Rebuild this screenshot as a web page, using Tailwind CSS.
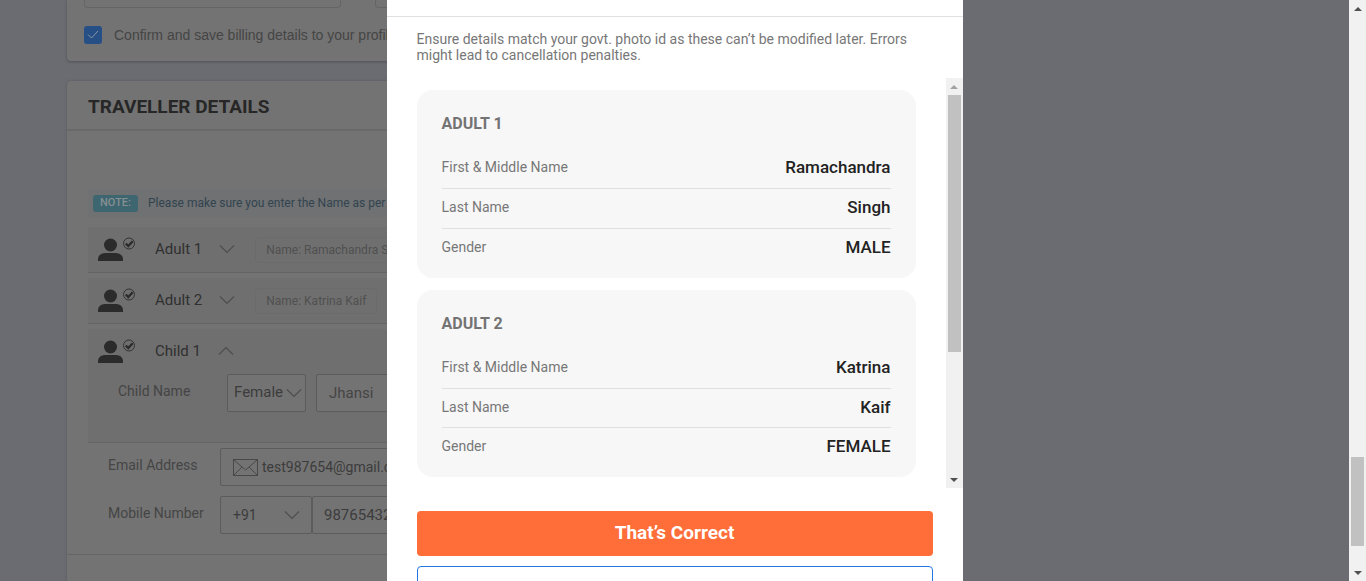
<!DOCTYPE html>
<html lang="en">
<head>
<meta charset="utf-8">
<meta name="viewport" content="width=device-width, initial-scale=1">
<title>Traveller details</title>
<script src="https://cdn.jsdelivr.net/npm/@tailwindcss/browser@4"></script>
</head>
<body class="flex h-screen overflow-hidden bg-[#6b6c71] font-['Roboto','Liberation_Sans',sans-serif] text-sm text-[#454545]">
<svg class="hidden" aria-hidden="true">
  <symbol id="person" viewBox="0 0 40 26">
    <circle cx="12.500" cy="8" r="6.500" fill="#2b2b2b"/>
    <path d="M0 24v-1.500C0 18 3.500 16 7.500 16h10c4 0 7.500 2 7.500 6.500V24z" fill="#2b2b2b"/>
    <circle cx="31" cy="6.500" r="5.500" fill="none" stroke="#333" stroke-width="1"/>
    <path d="m27.800 6.500 2.500 2.600 4.400-4.900" fill="none" stroke="#2b2b2b" stroke-width="2.200"/>
  </symbol>
  <symbol id="chevron" viewBox="0 0 16 10"><path d="m1 1.500 7 7 7-7" fill="none" stroke="#4e4e4e" stroke-width="1.200"/></symbol>
  <symbol id="arrow" viewBox="0 0 8 4"><path d="M0 0h8L4 4z"/></symbol>
</svg>

<div class="relative min-w-0 flex-1 overflow-hidden">
  <main class="ml-[67px] w-3/5">
    <section class="h-[61px] rounded-b bg-[#737373] px-[17px] shadow-[0_1px_3px_#505055]">
      <div class="flex gap-[34px]">
        <div class="h-2 w-[257px] rounded-b border border-t-0 border-[#656565]"></div>
        <div class="h-2 w-[257px] rounded-b border border-t-0 border-[#656565]"></div>
      </div>
      <label class="mt-[18px] flex h-[18px] items-center gap-3 font-['Liberation_Sans'] text-sm text-[#454545]">
        <span class="relative size-[18px]">
          <input type="checkbox" checked class="block size-[18px] appearance-none rounded-[3px] bg-[#264f86]">
          <svg class="pointer-events-none absolute inset-0" viewBox="0 0 18 18" fill="none" stroke="#8b95a3"><path d="m4 8.500 3.500 3.500L14 5"/></svg>
        </span>
        Confirm and save billing details to your profile
      </label>
    </section>

    <section class="mt-5 h-[600px] rounded-t bg-[#737373] shadow-[0_0_3px_#58585d]">
      <h2 class="flex h-[50px] items-center border-b-2 border-[#696969] px-[21px] pt-1 text-[19px] font-bold text-[#272727]">TRAVELLER DETAILS</h2>
      <div class="px-[21px] pt-[58px]">
        <p class="flex h-7 items-center gap-2.5 bg-[#6f7173] pl-[5px] text-xs text-[#32444f]">
          <span class="flex h-[17px] w-[45px] items-center justify-center rounded-[3px] bg-[#3e6670] text-[11px] font-medium text-[#858f91]">NOTE:</span>
          Please make sure you enter the Name as per ID
        </p>
        <div class="mt-2.5 flex flex-col gap-[5px]">
          <div class="flex h-[46px] items-center border-b border-[#646464] bg-[#6f6f6f] pl-2.5">
            <svg class="h-[26px] w-10"><use href="#person"/></svg>
            <button class="ml-[17px] flex items-center gap-[17px] text-[15px] text-[#303030]">Adult 1 <svg class="h-2.5 w-4"><use href="#chevron"/></svg></button>
            <span class="ml-5 flex h-[26px] items-center rounded border border-[#6b6b6b] px-2.5 text-xs text-[#505050]">Name: Ramachandra S</span>
          </div>
          <div class="flex h-[46px] items-center border-b border-[#646464] bg-[#6f6f6f] pl-2.5">
            <svg class="h-[26px] w-10"><use href="#person"/></svg>
            <button class="ml-[17px] flex items-center gap-[17px] text-[15px] text-[#303030]">Adult 2 <svg class="h-2.5 w-4"><use href="#chevron"/></svg></button>
            <span class="ml-5 flex h-[26px] items-center rounded border border-[#6b6b6b] px-2.5 text-xs text-[#505050]">Name: Katrina Kaif</span>
          </div>
          <div class="h-[114px] border-b border-[#646464] bg-[#6f6f6f]">
            <div class="flex h-[45px] items-center pl-2.5">
              <svg class="h-[26px] w-10"><use href="#person"/></svg>
              <button class="ml-[17px] flex items-center gap-[17px] text-[15px] text-[#303030]">Child 1 <svg class="h-2.5 w-4 rotate-180"><use href="#chevron"/></svg></button>
            </div>
            <div class="flex">
              <label for="child" class="w-[139px] pt-[7px] pl-[30px]">Child Name</label>
              <span class="relative w-[79px]">
                <select aria-label="Title" class="h-[38px] w-full appearance-none rounded-xs border border-[#5c5c5c] bg-[#737373] pl-1.5 text-[15px] text-[#3c3c3c]"><option>Female</option></select>
                <svg class="pointer-events-none absolute top-3.5 right-1 h-2.5 w-4"><use href="#chevron"/></svg>
              </span>
              <input id="child" value="Jhansi" class="ml-2.5 h-[38px] w-40 rounded-xs border border-[#5c5c5c] bg-[#737373] px-3 text-[15px]">
            </div>
          </div>
        </div>
        <div class="mt-[5px] flex">
          <label for="email" class="w-[132px] pt-[7px] pl-5">Email Address</label>
          <div class="flex h-[38px] w-80 items-center gap-1 rounded-xs border border-[#5c5c5c] pl-3">
            <svg class="h-[17px] w-[25px]" viewBox="0 0 25 17" fill="none" stroke="#484848"><rect x=".5" y=".5" width="24" height="16"/><path d="m1 1 11.500 10L24 1M1 16l8-8m15 8-8-8"/></svg>
            <input id="email" type="email" value="test987654@gmail.com" class="min-w-0 flex-1 bg-transparent text-[#3c3c3c]">
          </div>
        </div>
        <div class="mt-2.5 flex">
          <label for="mobile" class="w-[132px] pt-[7px] pl-5">Mobile Number</label>
          <span class="relative w-[92px]">
            <select aria-label="Country code" class="h-[38px] w-full appearance-none rounded-xs border border-[#5c5c5c] pl-3 text-[#3c3c3c]"><option>+91</option></select>
            <svg class="pointer-events-none absolute top-3.5 right-3 h-2.5 w-4"><use href="#chevron"/></svg>
          </span>
          <input id="mobile" type="tel" value="9876543210" class="h-[38px] w-40 rounded-xs border border-[#5c5c5c] px-[11px] text-[15px] text-[#3c3c3c]">
        </div>
      </div>
      <hr class="mt-5 border-[#666]">
    </section>
  </main>

  <div class="absolute inset-0 flex justify-center">
    <div role="dialog" aria-label="Review traveller details" class="flex w-[576px] flex-col bg-white">
      <div class="h-[17px] shrink-0 border-b border-[#e0e0e0]"></div>
      <p class="mt-3.5 px-[30px] text-sm leading-4 text-[#777]">Ensure details match your govt. photo id as these can’t be modified later. Errors<br>might lead to cancellation penalties.</p>
      <div class="mt-[15px] flex h-[410px] shrink-0">
        <div class="flex flex-1 flex-col gap-3 pt-3 pr-[30px] pl-[30px]">
          <section class="h-[188px] rounded-2xl bg-[#f7f7f7] px-[25px] pt-6">
            <h3 class="text-base leading-5 font-bold text-[#737373]">ADULT 1</h3>
            <dl class="mt-[15px] text-[#777]">
              <div class="flex h-10 justify-between border-b border-[#e0e0e0] pt-2"><dt class="leading-5">First &amp; Middle Name</dt><dd class="text-[17px] leading-5 font-medium text-[#222]">Ramachandra</dd></div>
              <div class="flex h-10 justify-between border-b border-[#e0e0e0] pt-2"><dt class="leading-5">Last Name</dt><dd class="text-[17px] leading-5 font-medium text-[#222]">Singh</dd></div>
              <div class="flex justify-between pt-2"><dt class="leading-5">Gender</dt><dd class="text-[17px] leading-5 font-medium text-[#222]">MALE</dd></div>
            </dl>
          </section>
          <section class="h-[187px] rounded-2xl bg-[#f7f7f7] px-[25px] pt-6">
            <h3 class="text-base leading-5 font-bold text-[#737373]">ADULT 2</h3>
            <dl class="mt-[15px] text-[#777]">
              <div class="flex h-10 justify-between border-b border-[#e0e0e0] pt-2"><dt class="leading-5">First &amp; Middle Name</dt><dd class="text-[17px] leading-5 font-medium text-[#222]">Katrina</dd></div>
              <div class="flex h-[39px] justify-between border-b border-[#e0e0e0] pt-2"><dt class="leading-5">Last Name</dt><dd class="text-[17px] leading-5 font-medium text-[#222]">Kaif</dd></div>
              <div class="flex justify-between pt-2"><dt class="leading-5">Gender</dt><dd class="text-[17px] leading-5 font-medium text-[#222]">FEMALE</dd></div>
            </dl>
          </section>
        </div>
        <div class="flex w-[17px] flex-col items-center bg-[#f1f1f1]">
          <div class="flex h-[17px] items-center"><svg class="h-1 w-2 rotate-180 fill-[#a3a3a3]"><use href="#arrow"/></svg></div>
          <div class="h-[257px] w-[13px] bg-[#c1c1c1]"></div>
          <div class="mt-auto flex h-[17px] items-center"><svg class="h-1 w-2 fill-[#505050]"><use href="#arrow"/></svg></div>
        </div>
      </div>
      <div class="mt-[23px] flex flex-col gap-2.5 px-[30px]">
        <button class="h-[45px] shrink-0 rounded bg-[#ff6d38] pb-0.5 text-[19px] font-bold text-white">That’s Correct</button>
        <button aria-label="Edit details" class="h-[45px] shrink-0 rounded border border-[#2276e3] bg-white"></button>
      </div>
    </div>
  </div>
</div>

<div class="flex w-[17px] shrink-0 flex-col items-center bg-[#f1f1f1]">
  <div class="flex h-[17px] items-center"><svg class="h-1 w-2 rotate-180 fill-[#505050]"><use href="#arrow"/></svg></div>
  <div class="mt-auto h-[89px] w-[13px] bg-[#c1c1c1]"></div>
  <div class="mt-[18px] flex h-[17px] items-center"><svg class="h-1 w-2 fill-[#505050]"><use href="#arrow"/></svg></div>
</div>
</body>
</html>
